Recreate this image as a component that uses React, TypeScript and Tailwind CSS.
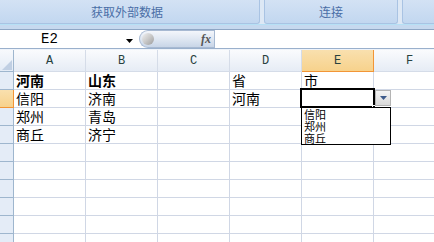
import React from "react";

const cols = ["A", "B", "C", "D", "E", "F"];
const data: Record<number, Record<string, string>> = {
  1: { A: "河南", B: "山东", D: "省", E: "市" },
  2: { A: "信阳", B: "济南", D: "河南" },
  3: { A: "郑州", B: "青岛" },
  4: { A: "商丘", B: "济宁" },
};
const boldCells = new Set(["1A", "1B"]);

const cjk = { fontFamily: '"Noto Sans CJK SC", "Noto Sans", sans-serif' };
const mono = { fontFamily: '"Liberation Mono", "DejaVu Sans Mono", monospace' };

export default function App() {
  return (
    <div className="w-[434px] h-[242px] overflow-hidden bg-white relative select-none">
      {/* Ribbon */}
      <div className="h-[24px] bg-[#dde8f5] flex items-stretch relative">
        <div className="w-[270px] -ml-[10px] h-[24px] bg-gradient-to-b from-[#d3e2f4] to-[#c2d7f0] border border-t-0 border-[#a9c3e3] rounded-b-[3px] flex items-center justify-center pl-[4px]">
          <span className="text-[12px] text-[#4a6ea6] leading-none" style={cjk}>获取外部数据</span>
        </div>
        <div className="w-[4px]" />
        <div className="w-[134px] h-[24px] bg-gradient-to-b from-[#d3e2f4] to-[#c2d7f0] border border-t-0 border-[#a9c3e3] rounded-b-[3px] flex items-center justify-center">
          <span className="text-[12px] text-[#4a6ea6] leading-none" style={cjk}>连接</span>
        </div>
        <div className="w-[4px]" />
        <div className="flex-1 h-[24px] bg-gradient-to-b from-[#d3e2f4] to-[#c2d7f0] border border-t-0 border-r-0 border-[#a9c3e3] rounded-bl-[3px]" />
      </div>
      <div className="h-[1px] bg-[#b6e0f5]" />
      <div className="h-[4px] bg-[#c6d9ef]" />
      <div className="h-[1px] bg-[#8ea6c5]" />
      {/* Formula bar */}
      <div className="h-[18px] flex bg-white">
        <div className="w-[139px] flex items-center relative">
          <span className="absolute left-[41px] top-[1px] text-[14px] leading-[16px] text-black" style={mono}>E2</span>
          <svg className="absolute left-[126px] top-[9px]" width="7" height="4" viewBox="0 0 7 4">
            <path d="M0 0 H7 L3.5 4 Z" fill="#000" />
          </svg>
        </div>
        <div className="w-[75px] h-[18px] rounded-l-full bg-gradient-to-b from-[#f3f6fb] via-[#dfe7f2] to-[#c8d5e7] border border-[#a7b9d2] border-r-0 flex items-center justify-between pl-[2px] pr-[3px]">
          <div className="w-[12px] h-[12px] rounded-full bg-gradient-to-br from-[#f2f2f2] via-[#c9c9c9] to-[#9d9d9d]" />
          <span className="text-[12px] italic font-bold text-[#555] leading-none" style={{ fontFamily: '"Liberation Serif", serif' }}>fx</span>
        </div>
        <div className="w-[1px] bg-[#a7b9d2]" />
        <div className="flex-1 bg-white" />
      </div>
      <div className="h-[1px] bg-[#9ab0cc]" />
      <div className="h-[1px] bg-[#eef3fa]" />
      {/* Grid */}
      <div className="flex flex-col">
        <div className="flex h-[22px]">
          <div className="w-[14px] h-[22px] shrink-0 border-r border-b border-[#9eb6ce] bg-gradient-to-b from-[#f7f9fc] to-[#e3ebf6] relative">
            <svg className="absolute right-[1px] bottom-[1px]" width="10" height="10" viewBox="0 0 10 10">
              <path d="M10 0 V10 H0 Z" fill="#c0cfe3" />
            </svg>
          </div>
          {cols.map((c) => (
            <div
              key={c}
              className={
                c === "E"
                  ? "w-[72px] shrink-0 h-[22px] border-r border-b border-[#f29536] bg-gradient-to-b from-[#f9e0ae] to-[#f7d28c] flex items-center justify-center"
                  : "w-[72px] shrink-0 h-[22px] border-r border-b border-[#d5dce8] bg-gradient-to-b from-[#fafbfd] to-[#e6ecf5] flex items-center justify-center"
              }
            >
              <span className="text-[12px] leading-none text-[#27413e] pt-[1px]" style={mono}>{c}</span>
            </div>
          ))}
        </div>
        {Array.from({ length: 10 }, (_, i) => i + 1).map((r) => (
          <div key={r} className="flex h-[18px]">
            <div
              className={
                r === 2
                  ? "w-[14px] h-[18px] shrink-0 border-r border-b border-[#f29536] bg-gradient-to-b from-[#f9e0ae] to-[#f7d28c]"
                  : "w-[14px] h-[18px] shrink-0 border-r border-b border-[#9eb6ce] bg-[#e4ecf7]"
              }
            />
            {cols.map((c) => (
              <div
                key={c}
                className="w-[72px] h-[18px] shrink-0 border-r border-b border-[#d0d7e5] flex items-center pl-[2px]"
                style={cjk}
              >
                <span
                  className={
                    "text-[14px] leading-[17px] text-black " +
                    (boldCells.has(`${r}${c}`) ? "font-bold" : "font-normal")
                  }
                >
                  {data[r]?.[c] ?? ""}
                </span>
              </div>
            ))}
          </div>
        ))}
      </div>

      {/* Active cell E2 */}
      <div className="absolute left-[300px] top-[88px] w-[75px] h-[20px] border-2 border-black" />
      <div className="absolute left-[372px] top-[105px] w-[4px] h-[4px] bg-black border border-white" />
      {/* Dropdown button */}
      <div className="absolute left-[375px] top-[90px] w-[16px] h-[16px] border border-[#b4b4b4] bg-gradient-to-b from-[#f4f4f4] to-[#dadada] flex items-center justify-center">
        <svg width="7" height="4" viewBox="0 0 7 4">
          <path d="M0 0 H7 L3.5 4 Z" fill="#3d5a8a" />
        </svg>
      </div>
      {/* Dropdown list */}
      <div className="absolute left-[301px] top-[107px] w-[90px] h-[38px] border border-black bg-white flex flex-col pl-[2px]" style={cjk}>
        <div className="h-[12px] text-[11px] leading-[12px] text-black">信阳</div>
        <div className="h-[12px] text-[11px] leading-[12px] text-black">郑州</div>
        <div className="h-[12px] text-[11px] leading-[12px] text-black">商丘</div>
      </div>
    </div>
  );
}
